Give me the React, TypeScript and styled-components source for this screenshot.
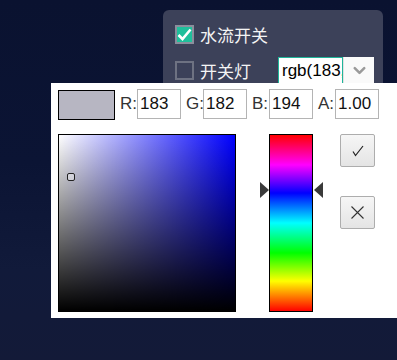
import React from 'react'
import styled, { createGlobalStyle } from 'styled-components'
import { ChevronDown } from 'lucide-react'

const GlobalStyle = createGlobalStyle`
  html, body {
    margin: 0;
    padding: 0;
    background: #0b1331;
    font-family: "Liberation Sans", Arial, sans-serif;
  }
`

const Scene = styled.div`
  position: relative;
  width: 397px;
  height: 360px;
  overflow: hidden;
  background: linear-gradient(180deg, #0a1230 0%, #0b1434 45%, #111a3a 75%, #131a38 100%);
`

const Panel = styled.div`
  margin: 10px 0 0 163px;
  width: 220px;
  height: 110px;
  box-sizing: border-box;
  padding: 15px 0 0 12px;
  border-radius: 6px;
  background: #3c4159;
  display: flex;
  flex-direction: column;
  gap: 17px;
`

const Row = styled.div`
  display: flex;
  align-items: center;
  height: 19px;
  white-space: nowrap;
`

const Box = styled.span<{ $on?: boolean }>`
  flex-shrink: 0;
  width: 19px;
  height: 19px;
  box-sizing: border-box;
  border: 2px solid ${p => (p.$on ? '#8a8e9c' : '#6e7282')};
  background: ${p => (p.$on ? '#1fbf9b' : 'transparent')};
  display: flex;
  align-items: center;
  justify-content: center;
`

const Label = styled.span`
  flex-shrink: 0;
  margin-left: 6px;
  color: #f4f4f4;
  font-family: "Noto Sans CJK SC", sans-serif;
  font-size: 17px;
  line-height: 19px;
`

const ColorField = styled.div`
  flex-shrink: 0;
  display: flex;
  margin-left: 27px;
  height: 27px;
`

const FieldText = styled.div`
  width: 65px;
  box-sizing: border-box;
  border: 1px solid #1fb59a;
  background: #fff;
  color: #000;
  font-size: 17px;
  line-height: 25px;
  padding-left: 3px;
  overflow: hidden;
  white-space: nowrap;
`

const DropBtn = styled.div`
  width: 30px;
  background: #fafafa;
  border-left: 1px solid #e2e2e2;
  display: flex;
  align-items: center;
  justify-content: center;
  color: #9a9a9a;
`

const Popup = styled.div`
  position: absolute;
  left: 51px;
  top: 83px;
  width: 360px;
  height: 235px;
  box-sizing: border-box;
  background: #fff;
  padding: 6px 0 0 7px;
`

const TopRow = styled.div`
  display: flex;
  align-items: center;
  height: 30px;
`

const Swatch = styled.div`
  width: 57px;
  height: 30px;
  box-sizing: border-box;
  border: 1px solid #000;
  background: rgb(183, 182, 194);
  margin-top: 2px;
  margin-right: 5px;
`

const Chan = styled.span`
  font-size: 17px;
  color: #333;
  width: 17px;
`

const ChanInput = styled.div`
  width: 44px;
  height: 30px;
  box-sizing: border-box;
  border: 1px solid #b4b4b4;
  font-size: 17px;
  line-height: 28px;
  color: #111;
  padding-left: 2px;
  margin-right: 5px;
`

const Body = styled.div`
  display: flex;
  align-items: flex-start;
  margin-top: 15px;
`

const SatBox = styled.div`
  position: relative;
  width: 178px;
  height: 178px;
  box-sizing: border-box;
  border: 1px solid #000;
  background: linear-gradient(to top, #000, rgba(0, 0, 0, 0)),
    linear-gradient(to right, #fff, #0000ff);
`

const Picker = styled.span`
  position: absolute;
  left: 8px;
  top: 38px;
  width: 8px;
  height: 8px;
  box-sizing: border-box;
  border: 1.5px solid #222;
  border-radius: 2px;
  background: rgba(255, 255, 255, 0.4);
`

const HueWrap = styled.div`
  position: relative;
  margin-left: 33px;
`

const HueBar = styled.div`
  width: 44px;
  height: 178px;
  box-sizing: border-box;
  border: 1px solid #000;
  background: linear-gradient(
    to bottom,
    #ff0000 0%,
    #ff00ff 17%,
    #0000ff 33%,
    #00ffff 50%,
    #00ff00 67%,
    #ffff00 83%,
    #ff0000 100%
  );
`

const Arrow = styled.span<{ $side: 'left' | 'right' }>`
  position: absolute;
  top: 48px;
  width: 0;
  height: 0;
  border-top: 8px solid transparent;
  border-bottom: 8px solid transparent;
  ${p =>
    p.$side === 'left'
      ? 'left: -9px; border-left: 9px solid #3a3a3a;'
      : 'right: -10px; border-right: 9px solid #3a3a3a;'}
`

const Actions = styled.div`
  display: flex;
  flex-direction: column;
  gap: 29px;
  margin-left: 27px;
`

const ActBtn = styled.div`
  width: 35px;
  height: 33px;
  box-sizing: border-box;
  border: 1px solid #adadad;
  border-radius: 2px;
  background: linear-gradient(#f6f6f6, #e4e4e4);
  display: flex;
  align-items: center;
  justify-content: center;
  color: #333;
`

export default function App() {
  return (
    <>
      <GlobalStyle />
      <Scene>
        <Panel>
          <Row>
            <Box $on>
              <svg width="15" height="13" viewBox="0 0 15 13">
                <polyline points="1.5,7 5.5,11 13.5,1.5" fill="none" stroke="#fff" strokeWidth="2.6" />
              </svg>
            </Box>
            <Label>水流开关</Label>
          </Row>
          <Row>
            <Box />
            <Label>开关灯</Label>
            <ColorField>
              <FieldText>rgb(183, 182, 194)</FieldText>
              <DropBtn>
                <ChevronDown size={19} strokeWidth={3.2} />
              </DropBtn>
            </ColorField>
          </Row>
        </Panel>
        <Popup>
          <TopRow>
            <Swatch />
            <Chan>R:</Chan>
            <ChanInput>183</ChanInput>
            <Chan>G:</Chan>
            <ChanInput>182</ChanInput>
            <Chan>B:</Chan>
            <ChanInput>194</ChanInput>
            <Chan>A:</Chan>
            <ChanInput>1.00</ChanInput>
          </TopRow>
          <Body>
            <SatBox>
              <Picker />
            </SatBox>
            <HueWrap>
              <HueBar />
              <Arrow $side="left" />
              <Arrow $side="right" />
            </HueWrap>
            <Actions>
              <ActBtn>
                <svg width="14" height="12" viewBox="0 0 14 12">
                  <polyline points="2,6.5 4.5,10.5 12,1" fill="none" stroke="#222" strokeWidth="1.2" />
                </svg>
              </ActBtn>
              <ActBtn>
                <svg width="15" height="15" viewBox="0 0 15 15">
                  <path d="M1.5 1.5 L13.5 13.5 M13.5 1.5 L1.5 13.5" stroke="#333" strokeWidth="1.1" />
                </svg>
              </ActBtn>
            </Actions>
          </Body>
        </Popup>
      </Scene>
    </>
  )
}
